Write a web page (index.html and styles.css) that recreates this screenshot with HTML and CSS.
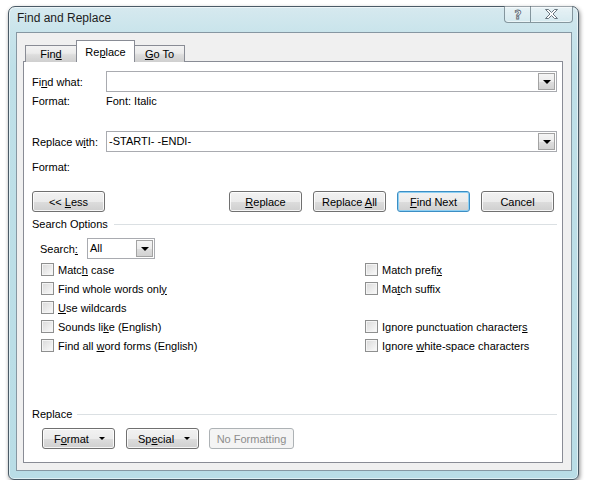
FILE: index.html
```html
<!DOCTYPE html>
<html>
<head>
<meta charset="utf-8">
<link rel="stylesheet" href="styles.css">
</head>
<body>
<div class="window">
  <div class="titlebar">
    <div class="title">Find and Replace</div>
    <div class="caption-btns">
      <div class="cbtn help"><svg width="10" height="12" viewBox="0 0 10 12"><text x="5" y="10.5" text-anchor="middle" class="qmark">?</text></svg></div>
      <div class="cbtn close"><svg width="13" height="10" viewBox="-0.5 -0.5 13 10"><polygon points="0,0 3,0 6,3 9,0 12,0 7.5,4.5 12,9 9,9 6,6 3,9 0,9 4.5,4.5" fill="#fff" stroke="#5a6670" stroke-width="0.9" stroke-linejoin="round"/></svg></div>
    </div>
  </div>
  <div class="client">
    <div class="tabs">
      <div class="tab"><span>Fin<u>d</u></span></div>
      <div class="tab active"><span>Re<u>p</u>lace</span></div>
      <div class="tab"><span><u>G</u>o To</span></div>
    </div>
    <div class="panel">
      <div class="row field first">
        <div class="label">Fi<u>n</u>d what:</div>
        <div class="combo"><span class="ctext"></span><span class="ddbtn"><span class="tri"></span></span></div>
      </div>
      <div class="row line fmt1">
        <div class="label">Format:</div>
        <div>Font: Italic</div>
      </div>
      <div class="row field second">
        <div class="label">Replace w<u>i</u>th:</div>
        <div class="combo"><span class="ctext">-STARTI- -ENDI-</span><span class="ddbtn"><span class="tri"></span></span></div>
      </div>
      <div class="row line fmt2">
        <div class="label">Format:</div>
      </div>
      <div class="row buttons">
        <button class="btn"><span>&lt;&lt; <u>L</u>ess</span></button>
        <div class="btn-group">
          <button class="btn"><span><u>R</u>eplace</span></button>
          <button class="btn"><span>Replace <u>A</u>ll</span></button>
          <button class="btn default"><span><u>F</u>ind Next</span></button>
          <button class="btn"><span>Cancel</span></button>
        </div>
      </div>
      <div class="section">
        <span>Search Options</span><span class="rule"></span>
      </div>
      <div class="row search">
        <div class="slabel">Search<u>:</u></div>
        <div class="select"><span class="ctext">All</span><span class="ddbtn"><span class="tri"></span></span></div>
      </div>
      <div class="options">
        <div class="opt"><span class="box"></span><span>Matc<u>h</u> case</span></div>
        <div class="opt"><span class="box"></span><span>Match prefi<u>x</u></span></div>
        <div class="opt"><span class="box"></span><span>Find whole words onl<u>y</u></span></div>
        <div class="opt"><span class="box"></span><span>Ma<u>t</u>ch suffix</span></div>
        <div class="opt"><span class="box"></span><span><u>U</u>se wildcards</span></div>
        <div class="opt"></div>
        <div class="opt"><span class="box"></span><span>Sounds li<u>k</u>e (English)</span></div>
        <div class="opt"><span class="box"></span><span>Ignore punctuation character<u>s</u></span></div>
        <div class="opt"><span class="box"></span><span>Find all <u>w</u>ord forms (English)</span></div>
        <div class="opt"><span class="box"></span><span>Ignore <u>w</u>hite-space characters</span></div>
      </div>
      <div class="section replace-sec">
        <span>Replace</span><span class="rule"></span>
      </div>
      <div class="row bottom">
        <button class="btn menu"><span>F<u>o</u>rmat</span><span class="mtri"></span></button>
        <button class="btn menu"><span>Sp<u>e</u>cial</span><span class="mtri"></span></button>
        <button class="btn disabled wide"><span>No Formatting</span></button>
      </div>
    </div>
  </div>
</div>
</body>
</html>
```
FILE: styles.css
```css
* { box-sizing: border-box; }
html, body { margin: 0; padding: 0; background: #fff; }
body {
  font-family: "Liberation Sans", Arial, sans-serif;
  font-size: 11px;
  color: #000;
}
u { text-decoration: underline; text-underline-offset: 1px; }

.window {
  margin: 6px 0 0 8px;
  width: 571px;
  height: 474px;
  border: 1px solid #4a5a66;
  border-radius: 7px 7px 6px 6px;
  background: linear-gradient(180deg, #d6e9ef 0px, #c9e4eb 25px, #bfe0e8 60px, #b9dde6 100%);
  box-shadow: 1px 2px 4px rgba(0,0,0,0.45), inset 0 0 0 1px rgba(255,255,255,0.55);
  display: flex;
  flex-direction: column;
}
.titlebar {
  height: 25px;
  display: flex;
  justify-content: space-between;
  align-items: flex-start;
  padding-left: 8px;
}
.title {
  font-size: 12px;
  line-height: 23px;
  color: #1c1c1c;
}
.caption-btns {
  display: flex;
  margin-right: 5px;
  margin-top: -1px;
}
.cbtn {
  height: 17px;
  border: 1px solid rgba(70,90,100,0.6);
  border-top: none;
  display: flex;
  align-items: center;
  justify-content: center;
  background: linear-gradient(180deg, rgba(255,255,255,0.45), rgba(255,255,255,0.15));
  box-shadow: inset 0 -1px 0 rgba(255,255,255,0.5);
}
.cbtn.help { width: 27px; border-radius: 0 0 0 4px; }
.cbtn.close { width: 42px; border-left: none; border-radius: 0 0 4px 0; }
.qmark {
  font-family: "DejaVu Sans", sans-serif;
  font-size: 12px;
  font-weight: bold;
  fill: #fff;
  stroke: #5a6670;
  stroke-width: 0.8;
}

.client {
  margin: 0 6px 0 7px;
  height: 439px;
  border: 1px solid #8697a2;
  background: #f0f0f0;
  padding: 7px 0 0 6px;
}
.tabs {
  display: flex;
  height: 22px;
  margin-bottom: -1px;
  padding-left: 2px;
  align-items: flex-start;
}
.tab {
  height: 17px;
  margin-top: 5px;
  width: 52px;
  border: 1px solid #898c95;
  border-bottom: none;
  background: linear-gradient(180deg, #f3f3f3 0%, #ebebeb 45%, #dddddd 55%, #cfcfcf 100%);
  text-align: center;
  line-height: 17px;
}
.tab + .tab { margin-left: -1px; }
.tab.active {
  position: relative;
  z-index: 1;
  height: 22px;
  margin-top: 0;
  width: 59px;
  background: #fff;
  line-height: 22px;
}
.tab:last-child { width: 51px; }

.panel {
  width: 540px;
  height: 402px;
  border: 1px solid #898c95;
  background: #fff;
  padding: 0 5px 0 8px;
}
.row { display: flex; align-items: center; }
.label { width: 74px; flex: none; }
.first { margin-top: 9px; }
.second { margin-top: 21px; }
.line { height: 18px; }
.fmt1 { margin-top: 0; }
.fmt2 { margin-top: 6px; }

.combo, .select {
  height: 21px;
  border: 1px solid #a9abb0;
  background: #fff;
  display: flex;
  align-items: flex-start;
}
.combo { width: 451px; }
.ctext { flex: 1; padding-left: 2px; line-height: 19px; }
.ddbtn {
  width: 17px;
  height: 17px;
  margin: 1px 1px 0 0;
  border: 1px solid #a3a3a3;
  background: linear-gradient(180deg, #f5f5f5 0%, #ececec 50%, #dedede 51%, #d2d2d2 100%);
  display: flex;
  align-items: center;
  justify-content: center;
}
.tri {
  width: 0; height: 0;
  border-left: 4px solid transparent;
  border-right: 4px solid transparent;
  border-top: 4px solid #000;
  margin-top: 1px;
}

.buttons { margin-top: 15px; justify-content: space-between; }
.btn-group { display: flex; gap: 11px; margin-right: 3px; }
.btn {
  width: 73px;
  height: 21px;
  padding: 0;
  border: 1px solid #707070;
  border-radius: 3px;
  background: linear-gradient(180deg, #f2f2f2 0%, #ebebeb 50%, #dddddd 51%, #cfcfcf 100%);
  box-shadow: inset 0 0 0 1px rgba(255,255,255,0.8);
  font-family: inherit;
  font-size: 11px;
  color: #000;
  display: flex;
  align-items: center;
  justify-content: center;
  white-space: pre;
}
.btn.default {
  border-color: #3c8ec4;
  box-shadow: inset 0 0 0 1px #8fd0f3;
}
.btn.disabled {
  border-color: #adb2b5;
  background: #f4f4f4;
  box-shadow: none;
  color: #8d8d8d;
}
.btn.wide { width: 85px; }

.section {
  display: flex;
  align-items: center;
  height: 14px;
  margin-top: 5px;
}
.rule {
  flex: 1;
  height: 1px;
  background: #dbe0e3;
  margin-left: 6px;
}
.replace-sec { margin-top: 52px; }
.replace-sec .rule { margin-left: 5px; }

.search { margin-top: 7px; padding-left: 8px; }
.slabel { width: 47px; }
.select { width: 68px; }
.select .ctext { padding-left: 2px; }

.options {
  display: grid;
  grid-template-columns: 324px 1fr;
  grid-auto-rows: 19px;
  margin-top: 1px;
  padding-left: 9px;
}
.opt { display: flex; align-items: center; white-space: pre; }
.box {
  width: 13px;
  height: 13px;
  border: 1px solid #8e8f8f;
  background: linear-gradient(135deg, #d9d9d9 0%, #ededed 60%, #fbfbfb 100%);
  box-shadow: inset 0 0 0 1px #f4f4f4;
  margin-right: 4px;
  flex: none;
}

.bottom { margin-top: 7px; padding-left: 10px; gap: 11px; }
.bottom .wide { margin-left: -1px; }
.btn.menu { justify-content: flex-start; padding-left: 11px; }
.mtri {
  width: 0; height: 0;
  border-left: 3px solid transparent;
  border-right: 3px solid transparent;
  border-top: 3px solid #000;
  margin-left: 10px;
}
```
